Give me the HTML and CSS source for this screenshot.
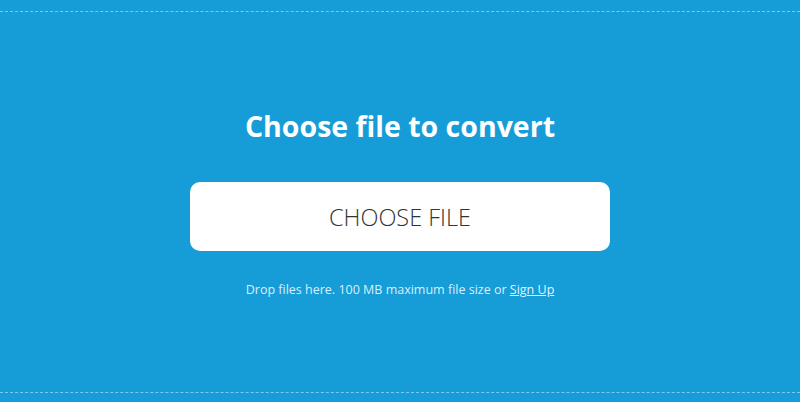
FILE: index.html
```html
<!DOCTYPE html>
<html>
<head>
<meta charset="utf-8">
<link rel="stylesheet" href="styles.css">
</head>
<body>
<div class="dropzone">
  <h1 class="title">Choose file to convert</h1>
  <button class="choose">CHOOSE FILE</button>
  <p class="hint">Drop files here. 100 MB maximum file size or <a href="#" class="signup">Sign Up</a></p>
</div>
</body>
</html>
```
FILE: styles.css
```css
html, body {
  margin: 0;
  padding: 0;
  background: #169dd8;
  font-family: "Open Sans", "Noto Sans", sans-serif;
}
.dropzone {
  margin-top: 11px;
  height: 382px;
  box-sizing: border-box;
  padding-top: 97px;
  border-top: 1px dashed rgba(255,255,255,0.45);
  border-bottom: 1px dashed rgba(255,255,255,0.45);
  display: flex;
  flex-direction: column;
  align-items: center;
  color: #fff;
}
.title {
  margin: 0 0 39px;
  font-size: 28.5px;
  font-weight: 700;
  line-height: 34px;
}
.choose {
  width: 420px;
  height: 69px;
  border: none;
  border-radius: 10px;
  background: #fff;
  color: #333;
  font-family: "Open Sans", "Noto Sans", sans-serif;
  font-size: 23.5px;
  font-weight: 300;
  cursor: pointer;
}
.hint {
  margin: 30px 0 0;
  font-size: 12.5px;
  color: rgba(255,255,255,0.85);
}
.signup {
  color: rgba(255,255,255,0.9);
}
```
